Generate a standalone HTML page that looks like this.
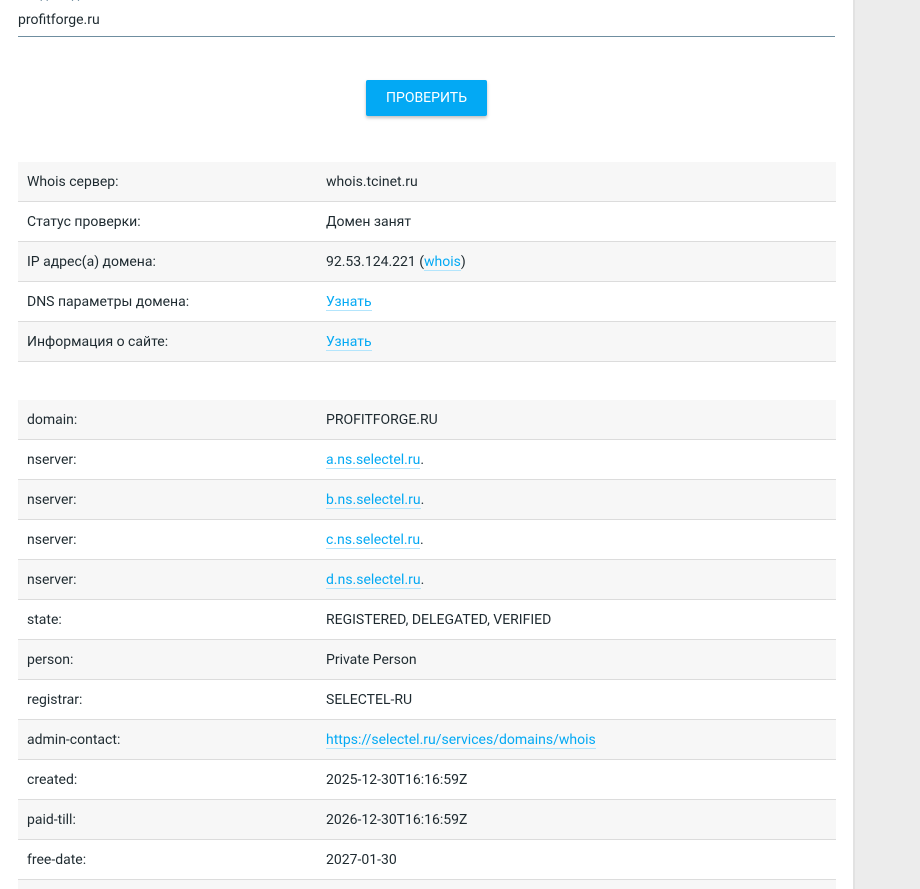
<!DOCTYPE html>
<html style="overflow:hidden"><head><meta charset="utf-8"><style>
html,body{margin:0;width:920px;height:889px;overflow:hidden;}
body{background:#ececec;font-family:"Roboto","Liberation Sans",sans-serif;color:#1e2a30;position:relative;}
.main{position:absolute;left:0;top:0;width:853px;height:889px;background:#fff;border-right:2px solid #e2e2e2;overflow:hidden;}
.lbl{position:absolute;left:18px;top:-12px;font-size:13px;color:#7f98a8;}
.inp{position:absolute;left:18px;top:12px;width:817px;height:24px;border-bottom:1px solid #6f8ea0;font-size:14px;}
.btn{position:absolute;left:366px;top:80px;width:121px;height:36px;background:#03a9f4;color:#fff;font-size:14px;line-height:36px;text-align:center;border-radius:2px;box-shadow:0 2px 3px rgba(0,0,0,.25);}
table{position:absolute;left:18px;width:818px;border-collapse:collapse;font-size:14px;}
td{height:39px;padding:0 0 0 9px;border-bottom:1px solid #dcdcdc;}
td:first-child{width:299px;}
td:last-child{padding-left:0;}
tr:nth-child(odd) td{background:#f7f7f7;}
a{color:#03a9f4;text-decoration:none;border-bottom:1px solid #b3e5fc;}
</style></head><body><div class="main">
<div class="lbl">Введите доменное имя</div>
<div class="inp">profitforge.ru</div>
<div class="btn">ПРОВЕРИТЬ</div>
<table style="top:162px">
<tr><td>Whois сервер:</td><td>whois.tcinet.ru</td></tr>
<tr><td>Статус проверки:</td><td>Домен занят</td></tr>
<tr><td>IP адрес(а) домена:</td><td>92.53.124.221 (<a>whois</a>)</td></tr>
<tr><td>DNS параметры домена:</td><td><a>Узнать</a></td></tr>
<tr><td>Информация о сайте:</td><td><a>Узнать</a></td></tr>
</table>
<table style="top:400px">
<tr><td>domain:</td><td>PROFITFORGE.RU</td></tr>
<tr><td>nserver:</td><td><a>a.ns.selectel.ru</a>.</td></tr>
<tr><td>nserver:</td><td><a>b.ns.selectel.ru</a>.</td></tr>
<tr><td>nserver:</td><td><a>c.ns.selectel.ru</a>.</td></tr>
<tr><td>nserver:</td><td><a>d.ns.selectel.ru</a>.</td></tr>
<tr><td>state:</td><td>REGISTERED, DELEGATED, VERIFIED</td></tr>
<tr><td>person:</td><td>Private Person</td></tr>
<tr><td>registrar:</td><td>SELECTEL-RU</td></tr>
<tr><td>admin-contact:</td><td><a>https://selectel.ru/services/domains/whois</a></td></tr>
<tr><td>created:</td><td>2025-12-30T16:16:59Z</td></tr>
<tr><td>paid-till:</td><td>2026-12-30T16:16:59Z</td></tr>
<tr><td>free-date:</td><td>2027-01-30</td></tr>
<tr><td>&nbsp;</td><td>&nbsp;</td></tr>
</table>
</div></body></html>
